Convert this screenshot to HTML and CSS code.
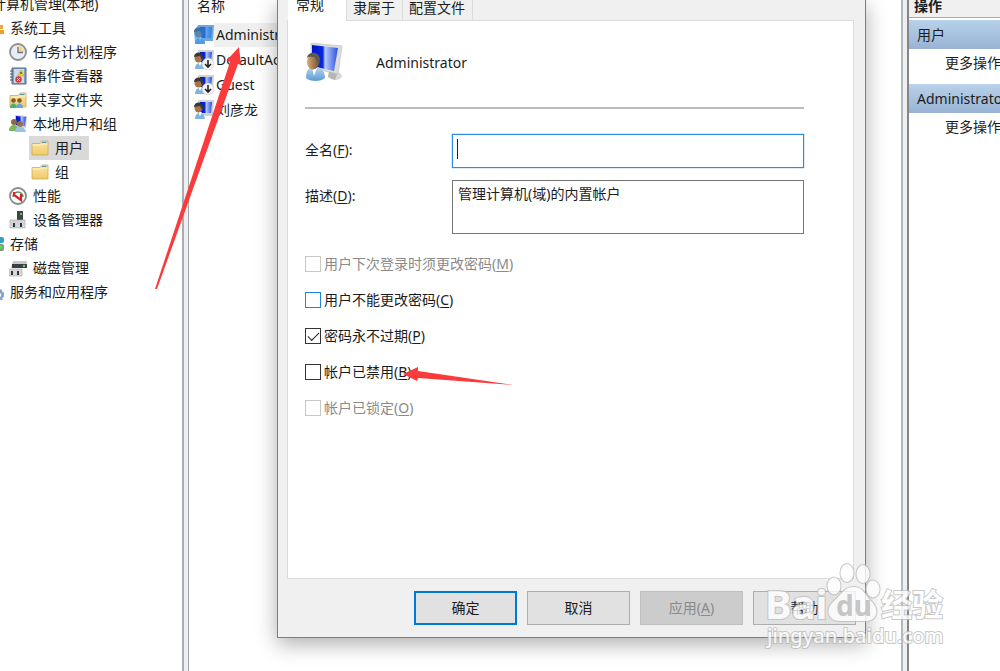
FILE: index.html
```
<!DOCTYPE html>
<html lang="zh-CN">
<head>
  <meta charset="UTF-8" />
  <meta name="viewport" content="width=device-width, initial-scale=1.0" />
  <title>计算机管理</title>
  <link rel="stylesheet" href="styles.css">
</head>
<body>
  <!-- shared icons -->
  <svg class="defs" width="0" height="0">
    <defs>
      <linearGradient id="screen" x1="0" y1="0" x2="1" y2="0">
        <stop offset="0" stop-color="#0010c8" />
        <stop offset="0.42" stop-color="#0a2be0" />
        <stop offset="0.5" stop-color="#b9cdfa" />
        <stop offset="1" stop-color="#2a4fe0" />
      </linearGradient>
      <linearGradient id="shirt" x1="0" y1="0" x2="0" y2="1">
        <stop offset="0" stop-color="#b5d6f0" />
        <stop offset="1" stop-color="#5b9bd2" />
      </linearGradient>
      <linearGradient id="face" x1="0" y1="0" x2="1" y2="0">
        <stop offset="0" stop-color="#d8a878" />
        <stop offset="1" stop-color="#7a5230" />
      </linearGradient>
      <linearGradient id="paper" x1="0" y1="0" x2="0" y2="1">
        <stop offset="0" stop-color="#fbe6a2" />
        <stop offset="1" stop-color="#eecb6c" />
      </linearGradient>
      <symbol id="user" viewBox="0 0 40 40">
        <ellipse cx="30" cy="33" rx="7" ry="4" fill="#d8d8d8" />
        <path d="M24 28l8 3-2 6-7-3z" fill="#b5b5b5" />
        <path d="M6 0l31 3-4 28L6 25z" fill="#dcdcdc" stroke="#b8b8b8" stroke-width="0.6" />
        <path d="M7 2l26 3-4 23L7 23z" fill="url(#screen)" />
        <path d="M1 35c0-9 4-11 9-11s10 3 10 11c-4 4-15 4-19 0z" fill="url(#shirt)" />
        <path d="M7 25l2 8 3-8z" fill="#fff" />
        <ellipse cx="8" cy="19" rx="6" ry="7.500" fill="url(#face)" />
        <path d="M2 15c1-7 12-7 13 1l-1 7c-2-4-3-8-5-9-3 0-5-1-7 1z" fill="#5d5a54" />
      </symbol>
      <symbol id="small-user" viewBox="0 0 20 20">
        <path d="M4 0h16l-1 16H4z" fill="#d2d2d2" />
        <path d="M6 2h12l-1 11H6z" fill="url(#screen)" />
        <path d="M1 19c0-8 9-8 10 0z" fill="#7fb4e0" />
        <path d="M4 12l2 4 2-4z" fill="#fff" />
        <ellipse cx="4.500" cy="8" rx="4" ry="4.500" fill="#a87448" />
        <path d="M0 7c0-6 9-6 9 0l-1 3-2-4z" fill="#3c3833" />
      </symbol>
      <symbol id="folder" viewBox="0 0 18 18">
        <path d="M1 4.500h8l2-2.500h6v14H1z" fill="url(#paper)" stroke="#d2ab52" stroke-width="0.800" />
        <path d="M11 3.500h4.500" stroke="#5a92b8" stroke-width="1.200" />
        <path d="M1.500 6h9l1-1h5" stroke="#fff3c8" fill="none" />
      </symbol>
      <symbol id="down" viewBox="0 0 20 20">
        <circle cx="14" cy="14" r="6" fill="#f4f4f4" stroke="#bbb" stroke-width="0.500" />
        <path d="M14 10v7M11 14l3 3 3-3" stroke="#222" stroke-width="1.600" fill="none" />
      </symbol>
    </defs>
  </svg>

  <main class="console">
    <nav class="pane tree-pane">
      <ul class="tree">
        <li><a class="node" href="#"><svg class="icon"></svg>计算机管理(本地)</a></li>
        <li class="level-1"><a class="node" href="#"><svg class="icon" viewBox="0 0 18 18"><path d="M4 6h13v4H4z" fill="#e8a93a" /><path d="M8 11h10v4H8z" fill="#f0a020" /></svg>系统工具</a></li>
        <li class="level-2"><a class="node" href="#"><svg class="icon" viewBox="0 0 18 18"><circle cx="9" cy="9" r="8" fill="#e6edf4" stroke="#8f8f8f" stroke-width="1.800" /><path d="M9 9V3a6 6 0 0 1 6 6z" fill="#f6d58c" /><path d="M9 4v5.500h5" stroke="#6a7480" stroke-width="1.300" fill="none" /></svg>任务计划程序</a></li>
        <li class="level-2"><a class="node" href="#"><svg class="icon" viewBox="0 0 18 18"><path d="M3 1h14v16H3z" fill="#7fa0c8" stroke="#54688a" /><path d="M5 2h10v14H5z" fill="#c9daee" /><path d="M1 4h3M1 7h3M1 10h3M1 13h3" stroke="#555" /><path d="M12 3l3.500 6h-7z" fill="#f5d51c" stroke="#b79a12" stroke-width="0.500" /><path d="M12 5v2" stroke="#222" /><circle cx="9.500" cy="12.500" r="3.200" fill="#d9343a" /><path d="M8 11l3 3m0-3l-3 3" stroke="#fff" stroke-width="0.900" /></svg>事件查看器</a></li>
        <li class="level-2"><a class="node" href="#"><svg class="icon" viewBox="0 0 18 18"><use href="#folder" /><circle cx="4.500" cy="9.500" r="2.300" fill="#80583a" /><path d="M1 17c0-6 7-6 7 0z" fill="#4dae72" /><circle cx="10.500" cy="9.500" r="2.300" fill="#80583a" /><path d="M7 17c0-6 7-6 7 0z" fill="#6aa5d8" /></svg>共享文件夹</a></li>
        <li class="level-2"><a class="node" href="#"><svg class="icon" viewBox="0 0 18 18"><path d="M6 0l12 1-1 12-11-2z" fill="#c9ccd2" /><path d="M7 1l10 1-1 9-9-1z" fill="url(#screen)" /><circle cx="5" cy="7" r="3" fill="#8a6848" /><path d="M0 16c0-8 9-8 10 0z" fill="#7cb55c" /><circle cx="11" cy="9" r="3" fill="#94704c" /><path d="M6 17c0-7 10-7 11 0z" fill="#9cc2e4" /></svg>本地用户和组</a></li>
        <li class="level-3"><a class="node selected" href="#"><svg class="icon"><use href="#folder" /></svg>用户</a></li>
        <li class="level-3"><a class="node" href="#"><svg class="icon"><use href="#folder" /></svg>组</a></li>
        <li class="level-2"><a class="node" href="#"><svg class="icon" viewBox="0 0 18 18"><circle cx="9" cy="9" r="8" fill="#fff" stroke="#8a8a8a" stroke-width="1.800" /><path d="M4 10a5 5 0 0 1 10 0" fill="none" stroke="#5a8a60" stroke-width="1.500" /><path d="M5 5v3l7 5V7" fill="none" stroke="#e01e26" stroke-width="2.200" /></svg>性能</a></li>
        <li class="level-2"><a class="node" href="#"><svg class="icon" viewBox="0 0 18 18"><path d="M8 0h6v10H8z" fill="#444" /><path d="M11 2h2v2h-2z" fill="#4ccf5a" /><path d="M1 9h15v8H1z" fill="#d4d4d8" stroke="#aaa" stroke-width="0.600" /><path d="M5 12v4M12 12v4" stroke="#333" stroke-width="2" /></svg>设备管理器</a></li>
        <li class="level-1"><a class="node" href="#"><svg class="icon" viewBox="0 0 18 18"><rect x="3" y="2" width="15" height="6" rx="2" fill="#2f9fc8" /><rect x="3" y="9" width="15" height="7" rx="2" fill="#8a8f94" /><circle cx="15" cy="12" r="2" fill="#5fd04c" /></svg>存储</a></li>
        <li class="level-2"><a class="node" href="#"><svg class="icon" viewBox="0 0 18 18"><path d="M4 2h14l-1 7H2z" fill="#c6c8ca" /><path d="M3 5h15v4H3z" fill="#3c3f42" /><circle cx="15" cy="7" r="1.200" fill="#4fe04c" /><path d="M0 10h13v7H0z" fill="#d8d8dc" stroke="#aaa" stroke-width="0.600" /><path d="M3 12v4M9 12v4" stroke="#333" stroke-width="2" /></svg>磁盘管理</a></li>
        <li class="level-1"><a class="node" href="#"><svg class="icon" viewBox="0 0 18 18"><circle cx="13" cy="12" r="3.500" fill="none" stroke="#7fa3c6" stroke-width="2.500" /><circle cx="13" cy="12" r="5" fill="none" stroke="#7fa3c6" stroke-width="1.500" stroke-dasharray="2 2" /></svg>服务和应用程序</a></li>
      </ul>
    </nav>

    <section class="pane list-pane">
      <div class="list-head">名称</div>
      <ul class="users">
        <li class="current"><svg class="avatar" viewBox="0 0 20 20"><use href="#small-user" /><path d="M4 0h16l-1 16h-8v3H1L0 6z" fill="#3690e0" opacity="0.650" /></svg><span>Administrator</span></li>
        <li><svg class="avatar" viewBox="0 0 20 20"><use href="#small-user" /><use href="#down" /></svg><span>DefaultAccount</span></li>
        <li><svg class="avatar" viewBox="0 0 20 20"><use href="#small-user" /><use href="#down" /></svg><span>Guest</span></li>
        <li><svg class="avatar" viewBox="0 0 20 20"><use href="#small-user" /></svg><span>刘彦龙</span></li>
      </ul>
    </section>

    <aside class="pane actions">
      <h2>操作</h2>
      <h3>用户</h3>
      <a href="#">更多操作</a>
      <h3>Administrator</h3>
      <a href="#">更多操作</a>
    </aside>
  </main>

  <!-- user properties -->
  <form class="dialog">
    <div class="tabs">
      <button type="button" class="tab active">常规</button>
      <button type="button" class="tab">隶属于</button>
      <button type="button" class="tab">配置文件</button>
    </div>
    <div class="sheet">
      <div class="account">
        <svg class="portrait"><use href="#user" /></svg>
        <span>Administrator</span>
      </div>
      <div class="fields">
        <label for="fullName">全名(<u>F</u>):</label>
        <div class="field focused"><i class="caret"></i><input type="text" id="fullName" /></div>
        <label for="description">描述(<u>D</u>):</label>
        <textarea id="description">管理计算机(域)的内置帐户</textarea>
      </div>
      <div class="checks">
        <label class="off"><input type="checkbox" disabled /><span>用户下次登录时须更改密码(<u>M</u>)</span></label>
        <label><input type="checkbox" class="hot" /><span>用户不能更改密码(<u>C</u>)</span></label>
        <label><input type="checkbox" checked /><span>密码永不过期(<u>P</u>)</span></label>
        <label><input type="checkbox" /><span>帐户已禁用(<u>B</u>)</span></label>
        <label class="off"><input type="checkbox" disabled /><span>帐户已锁定(<u>O</u>)</span></label>
      </div>
    </div>
    <div class="buttons">
      <button type="submit" class="btn default">确定</button>
      <button type="button" class="btn">取消</button>
      <button type="button" class="btn" disabled>应用(<u>A</u>)</button>
      <button type="button" class="btn">帮助</button>
    </div>
  </form>

  <!-- red pointers -->
  <svg class="arrow arrow-user" viewBox="0 0 90 246"><path d="M84 2l2 18-3-1L2 244H0L75 17l-3-2z" fill="#fb3b3b" /></svg>
  <svg class="arrow arrow-disable" viewBox="0 0 112 20"><path d="M1 8l15-7v4l95 14L16 12l-1 3z" fill="#fb3b3b" /></svg>

  <!-- watermark -->
  <svg class="watermark" viewBox="0 0 190 94">
    <g class="ink">
      <text x="1" y="58" class="logo">Bai</text>
      <ellipse cx="70" cy="25" rx="6.500" ry="8.500" />
      <ellipse cx="83" cy="12" rx="6.500" ry="9" />
      <ellipse cx="99" cy="13" rx="6.500" ry="9" />
      <ellipse cx="109" cy="28" rx="6.500" ry="8.500" />
      <path d="M90 26c9 0 11 8 17 14 10 10 5 20-5 20H76c-12 0-15-11-7-19 8-7 11-15 21-15z" />
      <text x="117" y="55" class="cjk">经验</text>
      <text x="3" y="82" class="url">jingyan.baidu.com</text>
    </g>
    <text x="72" y="55" class="du">du</text>
  </svg>
</body>
</html>
```

FILE: styles.css
```
* {
  box-sizing: border-box;
}

body {
  margin: 0;
  min-height: 100vh;
  position: relative;
  overflow: hidden;
  font-family: "Noto Sans", "Noto Sans CJK SC", sans-serif;
  font-size: 14px;
  line-height: 24px;
  color: #1c1c1c;
  background: #fff;
}

ul {
  list-style: none;
  margin: 0;
  padding: 0;
}

a {
  color: inherit;
  text-decoration: none;
}

u {
  text-underline-offset: 2px;
}

.defs {
  position: absolute;
}

/* console */
.console {
  display: grid;
  grid-template-columns: 184px 1fr 93px;
  gap: 4px;
  min-height: 100vh;
  background: #eeeff0;
}

.pane {
  background: #fff;
  overflow: hidden;
  white-space: nowrap;
}

.tree-pane {
  border-right: 2px solid #a9adb3;
}

.tree {
  margin: -8px 0 0 -34px;
}

.tree li {
  height: 24px;
}

.level-1 {
  padding-left: 18px;
}

.level-2 {
  padding-left: 41px;
}

.level-3 {
  padding-left: 63px;
}

.node {
  display: inline-flex;
  align-items: center;
  gap: 6px;
  height: 24px;
  padding: 0 6px 0 2px;
}

.node.selected {
  background: #d9d9d9;
}

.icon {
  width: 18px;
  height: 18px;
  flex: none;
}

.list-pane {
  border-left: 1px solid #a0a4aa;
  border-right: 2px solid #b3b8bd;
}

.list-head {
  height: 22px;
  padding-left: 8px;
  line-height: 12px;
}

.users li {
  display: flex;
  align-items: center;
  height: 25px;
  padding-left: 5px;
}

.users span {
  padding-left: 2px;
}

.users .current span {
  background: #efefef;
}

.avatar {
  width: 20px;
  height: 20px;
}

.actions {
  border-left: 2px solid #858585;
}

.actions h2 {
  margin: 0 0 2px;
  height: 18px;
  padding-left: 5px;
  font-size: 14px;
  line-height: 12px;
  background: #f0f0f0;
  border-bottom: 1px solid #a8a8a8;
}

.actions h3 {
  margin: 0;
  padding-left: 8px;
  font-size: 14px;
  font-weight: normal;
  line-height: 29px;
  background: linear-gradient(#b9d1ea, #98b3d3);
}

.actions a {
  display: block;
  height: 35px;
  padding-left: 36px;
  line-height: 28px;
}

/* dialog */
.dialog {
  position: absolute;
  top: 0;
  left: 277px;
  right: 134px;
  padding: 0 11px 12px 9px;
  background: #f0f0f0;
  border: 1px solid #3d8fd2;
  border-top: 0;
  box-shadow: 0 6px 20px rgba(0, 0, 0, 0.32);
}

.tabs {
  display: flex;
  height: 20px;
  padding-left: 1px;
}

.tab {
  display: flex;
  align-items: flex-start;
  padding: 0 7px 0 6px;
  border: 0;
  border-right: 1px solid #dcdcdc;
  background: #f0f0f0;
  font: inherit;
  line-height: 16px;
  color: inherit;
}

.tab.active {
  padding: 0 22px 0 8px;
  margin-bottom: -1px;
  line-height: 10px;
  background: #fff;
  z-index: 1;
}

.sheet {
  min-height: 559px;
  padding: 18px 49px 0 17px;
  background: #fff;
  border: 1px solid #dcdcdc;
}

.account {
  display: flex;
  align-items: center;
  gap: 31px;
  height: 70px;
  padding-bottom: 20px;
  border-bottom: 2px solid #bdbdbd;
}

.portrait {
  width: 40px;
  height: 40px;
}

.fields {
  display: grid;
  grid-template-columns: 147px 1fr;
  gap: 12px 0;
  padding-top: 25px;
}

.fields label {
  padding-top: 4px;
}

.field {
  display: flex;
  align-items: flex-start;
  height: 34px;
  padding: 4px;
  border: 1px solid #767676;
}

.field.focused {
  border-color: #2c8be0;
  box-shadow: 0 0 1px #2c8be0;
}

.caret {
  width: 1px;
  height: 20px;
  background: #222;
}

.field input {
  flex: 1;
  min-width: 0;
  border: 0;
  outline: 0;
  padding: 0;
  font: inherit;
}

.fields textarea {
  height: 54px;
  padding: 1px 5px;
  border: 1px solid #767676;
  border-radius: 0;
  outline: 0;
  resize: none;
  overflow: hidden;
  font: inherit;
  color: inherit;
}

.checks {
  display: grid;
  gap: 12px;
  padding-top: 18px;
}

.checks label {
  display: flex;
  align-items: center;
  gap: 3px;
  height: 24px;
}

.checks .off {
  color: #8a8a8a;
}

.checks input {
  appearance: none;
  width: 16px;
  height: 16px;
  margin: 0;
  border: 1px solid #333;
  background: #fff;
}

.checks input:checked::after {
  content: "";
  display: block;
  width: 10px;
  height: 5px;
  margin: 3px 2px;
  border-left: 1px solid #222;
  border-bottom: 1px solid #222;
  transform: rotate(-45deg);
}

.checks input.hot {
  border-color: #1e86dc;
}

.checks input:disabled {
  border-color: #c8c8c8;
}

.buttons {
  display: flex;
  justify-content: flex-end;
  gap: 10px;
  padding-top: 12px;
  margin-right: -2px;
}

.btn {
  width: 103px;
  height: 34px;
  padding: 0;
  border: 1px solid #adadad;
  background: #e1e1e1;
  font: inherit;
  color: inherit;
}

.btn.default {
  border: 2px solid #0078d7;
}

.btn:disabled {
  border-color: #bfbfbf;
  background: #ccc;
  color: #8a8a8a;
}

/* overlays */
.arrow {
  position: absolute;
  pointer-events: none;
}

.arrow-user {
  left: 155px;
  top: 45px;
  width: 90px;
  height: 246px;
}

.arrow-disable {
  left: 402px;
  top: 366px;
  width: 112px;
  height: 20px;
}

.watermark {
  position: absolute;
  top: 561px;
  right: 46px;
  width: 190px;
  height: 94px;
  pointer-events: none;
}

.ink {
  fill: #fff;
  stroke: #bcbcbc;
  stroke-width: 2;
  opacity: 0.8;
  paint-order: stroke;
}

.watermark text {
  font-weight: bold;
}

.watermark .logo {
  font-size: 40px;
}

.watermark .cjk {
  font-size: 31px;
}

.watermark .url {
  font-size: 20px;
  font-weight: 500;
}

.watermark .du {
  font-size: 28px;
  fill: #c6c6c6;
}
```
